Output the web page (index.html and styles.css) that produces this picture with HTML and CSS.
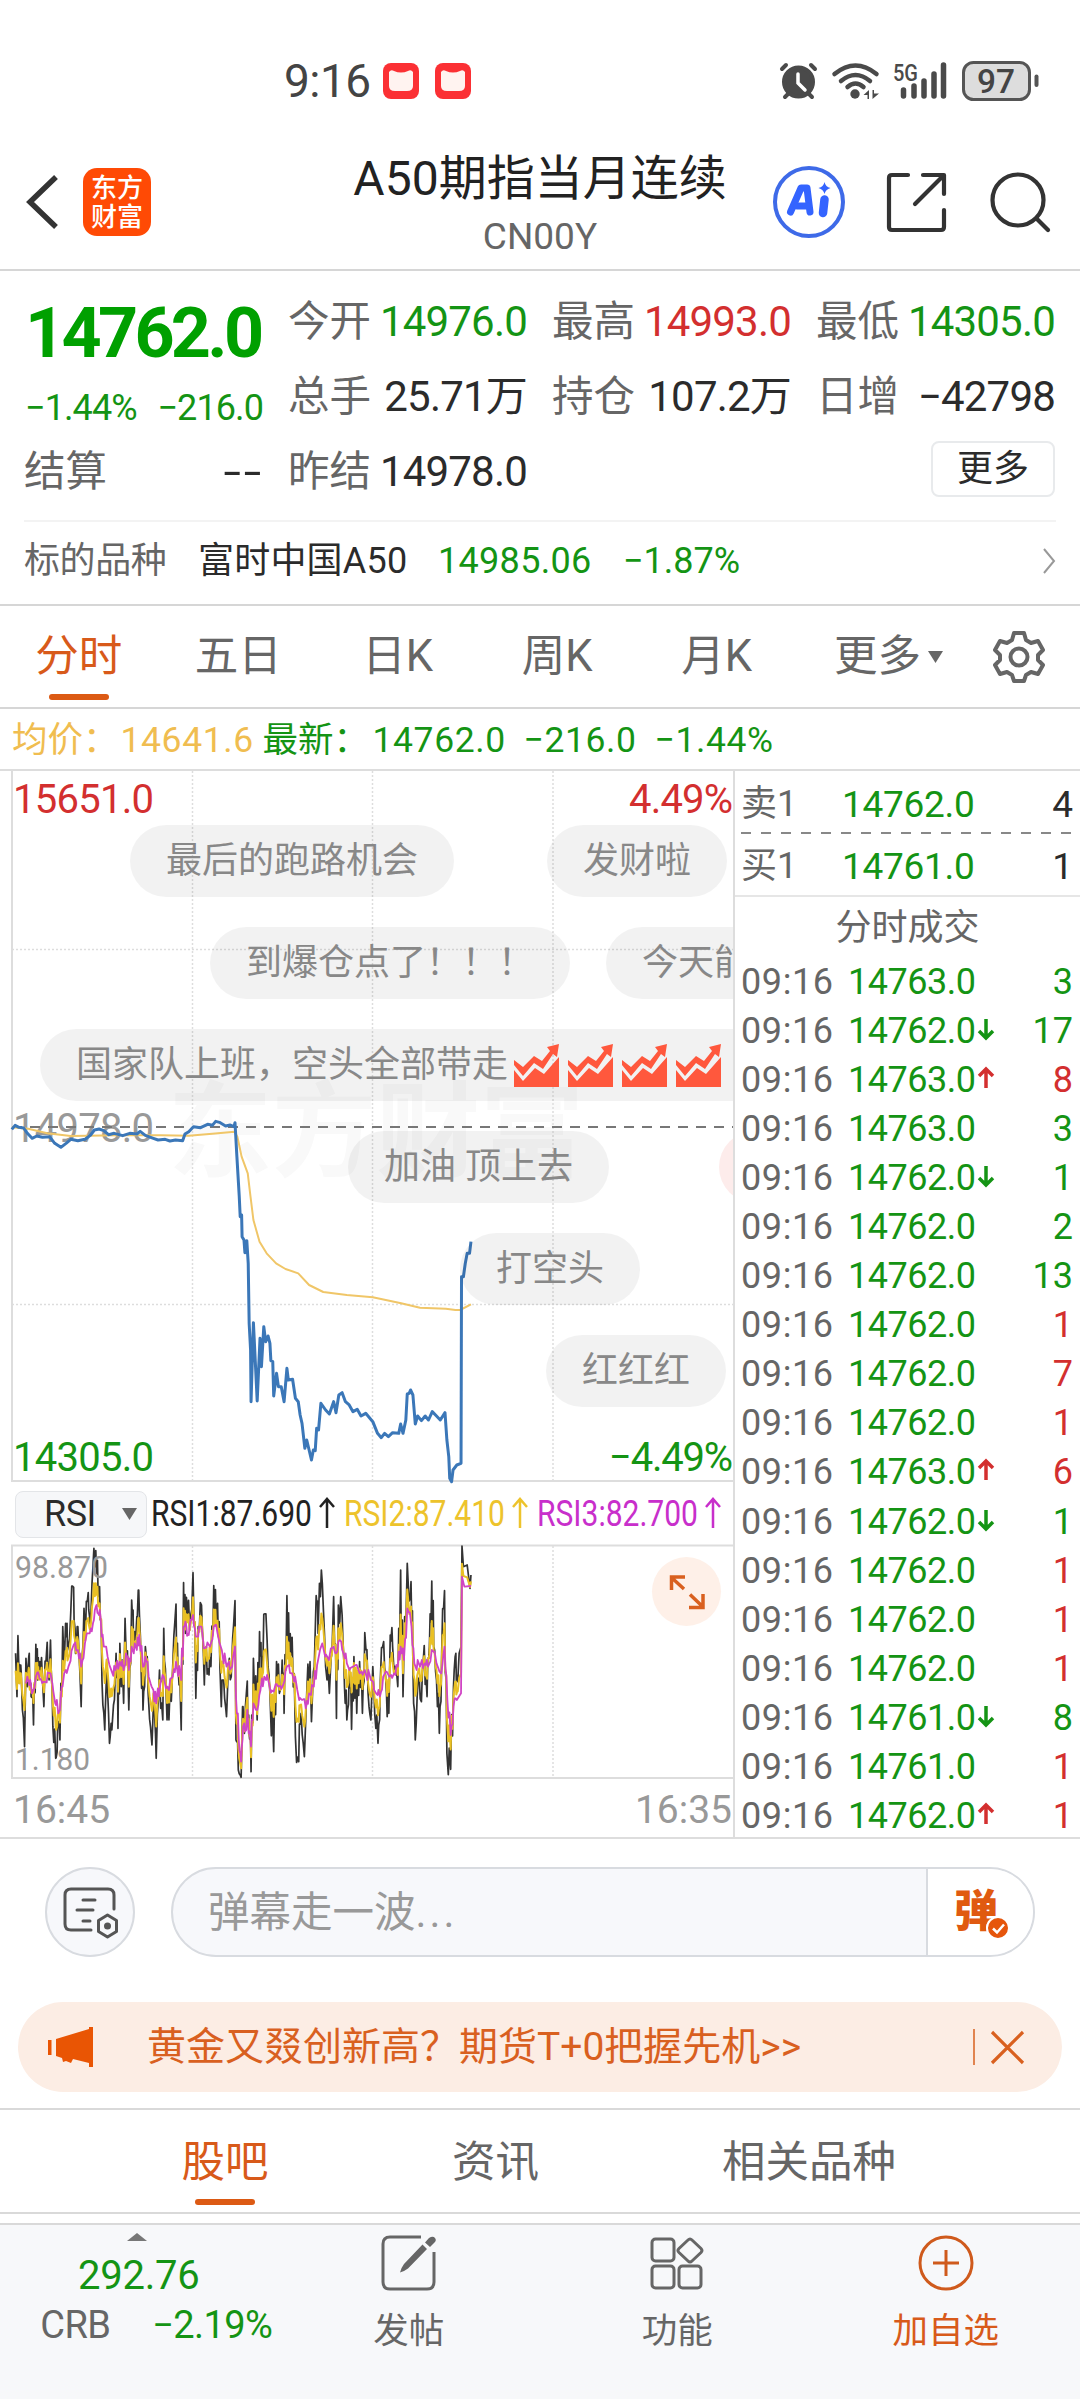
FILE: index.html
```html
<!DOCTYPE html>
<html lang="zh-CN">
<head>
<meta charset="utf-8">
<title>A50期指当月连续</title>
<link rel="stylesheet" href="styles.css">
</head>
<body>
<div class="status">
  <span class="clock">9:16</span>
  <svg class="packet" viewBox="0 0 36 36"><rect width="36" height="36" rx="8" fill="#fb3034"/><path d="M6 9q2-3 5-1q7 3 14 0q3-2 5 1v14q0 5-6 5H12q-6 0-6-5z" fill="#fff3f0"/></svg>
  <svg class="packet" viewBox="0 0 36 36"><rect width="36" height="36" rx="8" fill="#fb3034"/><path d="M6 9q2-3 5-1q7 3 14 0q3-2 5 1v14q0 5-6 5H12q-6 0-6-5z" fill="#fff3f0"/></svg>
  <svg class="indicators" viewBox="780 58 262 44">
    <g fill="none" stroke="#4a4a4a" stroke-width="4" stroke-linecap="round">
      <circle cx="798.500" cy="81" r="14.500" fill="#4a4a4a"/>
      <path d="M782 68l4-4M815 68l-4-4M788 93l-3 3M809 93l3 3"/>
      <path d="M798 73v9l7 7" stroke="#fff" stroke-width="3.500"/>
      <path d="M834.500 73q21-17 42 0M841 80q14.500-12 29 0M847.500 86q8-7 16 0" stroke-width="4.500"/>
      <path d="M903.500 89v6M914 85v10M924 80v15M934 73v22M943.500 64v31" stroke-width="5.500"/>
    </g>
    <circle cx="855" cy="93" r="4.700" fill="#4a4a4a"/><path d="M869 89v9h-1.500v-4H863.500zM872.500 98v-9H874v3.500h5z" fill="#4a4a4a"/>
    <text x="893" y="80" textLength="25" lengthAdjust="spacingAndGlyphs" font-size="24" font-weight="500" fill="#4a4a4a">5G</text>
    <rect x="963.500" y="61.500" width="66" height="37" rx="10" fill="#ddd" stroke="#555" stroke-width="3"/>
    <path d="M1036.500 75.500v8.500" stroke="#555" stroke-width="4" stroke-linecap="round"/>
    <text x="977" y="92" textLength="38" lengthAdjust="spacingAndGlyphs" font-size="34" font-weight="500" fill="#444">97</text>
  </svg>
</div>

<header class="header">
  <svg class="back" viewBox="0 0 34 56"><path d="M30 3L4 28l26 25" fill="none" stroke="#333" stroke-width="5.500"/></svg>
  <div class="logo"><span>东方</span><span>财富</span></div>
  <div class="title"><h1>A50期指当月连续</h1><p>CN00Y</p></div>
  <svg class="ai" viewBox="0 0 72 72"><circle cx="36" cy="36" r="34" fill="none" stroke="#3e6ae8" stroke-width="4"/><g stroke="#3464ff" stroke-linejoin="round" stroke-linecap="round" fill="none"><path d="M17.500 46L28 22h6l3 24" stroke-width="7"/><path d="M24 40h10" stroke-width="7"/><path d="M51.500 33.500L50 47" stroke-width="8.500"/></g><path d="M51.500 16q1 5 6 6q-5 1.500-6 6q-1-4.500-6-6q5-1 6-6z" fill="#3464ff"/></svg>
  <svg class="share" viewBox="0 0 60 60"><g fill="none" stroke="#333" stroke-width="4.200" stroke-linecap="round" stroke-linejoin="round"><path d="M22 3H6q-3 0-3 3v49q0 3 3 3h49q3 0 3-3V38"/><path d="M37 3h21v19M57 4L29 32"/></g></svg>
  <svg class="search" viewBox="0 0 62 62"><g fill="none" stroke="#333" stroke-width="4.200" stroke-linecap="round"><circle cx="29" cy="29" r="25.500"/><path d="M48 48l11 11"/></g></svg>
</header>

<section class="quote">
  <div class="last"><b>14762.0</b><p class="down"><span>−1.44%</span><span>−216.0</span></p></div>
  <div class="cell"><i>今开</i><span class="down">14976.0</span></div>
  <div class="cell"><i>最高</i><span class="up">14993.0</span></div>
  <div class="cell"><i>最低</i><span class="down">14305.0</span></div>
  <div class="cell"><i>总手</i><span>25.71万</span></div>
  <div class="cell"><i>持仓</i><span>107.2万</span></div>
  <div class="cell"><i>日增</i><span>−42798</span></div>
  <div class="cell"><i>结算</i><span class="none">--</span></div>
  <div class="cell"><i>昨结</i><span>14978.0</span></div>
  <div class="more"><span>更多</span></div>
</section>
<section class="underlying">
  <span class="kind">标的品种</span><span class="name">富时中国A50</span><span class="down value">14985.06</span><span class="down">−1.87%</span>
  <svg viewBox="0 0 14 26"><path d="M2 1l10 12L2 25" fill="none" stroke="#999" stroke-width="2"/></svg>
</section>

<nav class="periods">
  <span class="active">分时</span><span>五日</span><span>日K</span><span>周K</span><span>月K</span><span>更多<svg class="caret" viewBox="0 0 15 12"><path d="M0 0h15L7.500 12z" fill="#666"/></svg></span>
  <svg class="gear" viewBox="0 0 52 52"><g fill="none" stroke="#666" stroke-width="4" stroke-linejoin="round"><path d="M21 2h10l2 7 5 3 7-2 5 9-5 5v5l5 5-5 9-7-2-5 3-2 6H21l-2-6-5-3-7 2-5-9 5-5v-5l-5-5 5-9 7 2 5-3z"/><circle cx="26" cy="26" r="8.500"/></g></svg>
</nav>
<div class="summary">
  <span class="avg">均价：</span><span class="avg num">14641.6</span><span class="down latest">最新：</span><span class="down num">14762.0</span><span class="down num2">−216.0</span><span class="down num2">−1.44%</span>
</div>

<main class="board">
  <div class="charts">
    <div class="price-chart">
      <svg viewBox="0 771 734 712">
        <text class="mark" x="168" y="1169">东方财富</text>
        <path class="grid" d="M192.500 771V1481M372.500 771V1481M553 771V1481M12 949.500H734M12 1304.500H734"/>
        <path d="M12 771V1481H734" fill="none" stroke="#ddd" stroke-width="2"/>
        <text class="mid" x="13" y="1142" textLength="141">14978.0</text>
        <path d="M12 1127H734" stroke="#777" stroke-width="2" stroke-dasharray="10 8" fill="none"/>
        <g transform="translate(0 1090) scale(.4719 .33333)" fill="none">
          <path class="line avg-line" d="M25 112L60 116 100 130 150 138 250 136 340 136 400 137 450 131 497 125 503 140 512 200 525 250 530 310 537 390 550 455 565 490 585 520 605 537 632 550 655 585 685 606 735 615 790 622 850 640 890 653 945 656 965 660 975 660 998 643"/>
          <path class="line last-line" d="M25 118L32 106 40 112 50 114 58 130 68 145 78 138 90 142 105 140 116 160 129 172 140 160 150 148 165 152 180 148 192 135 200 120 210 117 220 122 230 134 242 130 260 137 275 130 290 132 297 124 308 136 325 145 335 150 350 148 360 153 372 150 387 152 392 132 400 125 410 110 425 113 440 103 450 106 457 94 465 97 478 108 488 105 496 110 498 98 502 200 507 320 509 380 512 375 513 440 517 450 519 488 523 452 526 520 528 700 531 780 532 935 537 698 541 815 545 933 551 745 554 830 559 710 563 755 568 738 572 760 574 812 578 815 580 918 586 850 590 890 596 890 602 935 608 835 611 870 620 868 626 925 632 935 636 975 640 1000 646 1075 650 1050 655 1080 660 1110 664 1080 668 1082 671 1015 675 1020 680 940 690 960 698 972 707 935 712 968 718 915 725 908 732 935 740 945 748 965 757 958 765 978 775 970 790 995 800 1030 808 1043 815 1030 823 1040 832 1028 845 1030 849 1002 854 1030 860 990 863 912 867 910 870 900 875 915 880 1002 885 978 893 992 901 978 908 990 916 965 925 978 933 990 943 968 947 1050 951 1100 953 1165 957 1175 960 1140 968 1125 977 1120 978 560 982 560 986 520 990 490 995 490 998 455"/>
        </g>
        <text class="up" x="13" y="813" textLength="141">15651.0</text>
        <text class="up" x="629" y="813" textLength="104">4.49%</text>
        <text class="down" x="13" y="1471" textLength="141">14305.0</text>
        <text class="down" x="609" y="1471" textLength="124">−4.49%</text>
      </svg>
      <div class="danmaku">
        <span style="left:130px;top:54px">最后的跑路机会</span>
        <span style="left:547px;top:54px">发财啦</span>
        <span style="left:210px;top:156px">到爆仓点了！！！</span>
        <span style="left:606px;top:156px">今天能</span>
        <span style="left:40px;top:258px">国家队上班，空头全部带走<svg viewBox="0 0 216 44"><defs><g id="surge"><path d="M0 17l9 7 11-11 8 5 8-10-3-4L45 1l-2 13-4-3-10 15-9-6L9 33 0 22z"/><path d="M0 27l9 11 12-13 9 6L45 14v30H0z"/></g></defs><g fill="#ff583d"><use href="#surge"/><use href="#surge" x="54"/><use href="#surge" x="108"/><use href="#surge" x="162"/></g></svg></span>
        <span style="left:348px;top:360px">加油 顶上去</span>
        <span class="hot" style="left:719px;top:360px"></span>
        <span style="left:460px;top:462px">打空头</span>
        <span style="left:546px;top:564px">红红红</span>
      </div>
    </div>
    <div class="indicator">
      <div class="select">RSI<svg class="caret" viewBox="0 0 15 12"><path d="M0 0h15L7.500 12z" fill="#666"/></svg></div>
      <svg class="readings" viewBox="150 1484 576 60">
        <g font-size="37"><text x="151" y="1526" textLength="161" lengthAdjust="spacingAndGlyphs" fill="#222">RSI1:87.690</text><text x="344" y="1526" textLength="161" lengthAdjust="spacingAndGlyphs" fill="#edc32c">RSI2:87.410</text><text x="537" y="1526" textLength="161" lengthAdjust="spacingAndGlyphs" fill="#c82fcb">RSI3:82.700</text></g>
        <g fill="none" stroke-width="2.500"><path d="M327 1528V1499M320 1507l7-8 7 8" stroke="#222"/><path d="M520 1528V1499M513 1507l7-8 7 8" stroke="#edc32c"/><path d="M713 1528V1499M706 1507l7-8 7 8" stroke="#c82fcb"/></g>
      </svg>
    </div>
    <svg class="rsi-chart" viewBox="0 1544 734 236">
      <path d="M12 1779V1545.500H734M12 1778H734" fill="none" stroke="#ddd" stroke-width="2"/>
      <path class="grid" d="M192.500 1546V1777M372.500 1546V1777M553 1546V1777"/>
      <g transform="translate(0 1480) scale(.4719 .33333)" fill="none"><path id="fast" class="line fast"/><path id="medium" class="line medium"/><path id="slow" class="line slow"/></g>
      <g font-size="31" fill="#999"><text x="15" y="1578" textLength="93" lengthAdjust="spacingAndGlyphs">98.870</text><text x="15" y="1770" textLength="75" lengthAdjust="spacingAndGlyphs">1.180</text></g>
      <circle cx="686.500" cy="1591.500" r="34.500" fill="#fef0e8"/>
      <path d="M671.500 1590V1577H685M672 1578l12 11M703 1594v13.500H689M702 1606l-12-11.500" fill="none" stroke="#d9601f" stroke-width="3.500"/>
    </svg>
    <div class="times"><span>16:45</span><span>16:35</span></div>
  </div>

  <aside class="ticks">
    <div class="ask"><i>卖1</i><span class="down">14762.0</span><em>4</em></div>
    <div class="bid"><i>买1</i><span class="down">14761.0</span><em>1</em></div>
    <h2>分时成交</h2>
    <ul id="trades"></ul>
  </aside>
</main>

<div class="composer">
  <div class="tune"><svg viewBox="0 0 56 52"><g fill="none" stroke="#555" stroke-width="3" stroke-linecap="round" stroke-linejoin="round"><path d="M28 43H8q-6 0-6-6V8q0-6 6-6h37q6 0 6 6v14"/><path d="M20 13h12M14 23h16M20 34h7"/><path d="M44.500 28l9 5.500v11l-9 5.500-9-5.500v-11z"/></g><circle cx="44.500" cy="39" r="3.500" fill="#555"/></svg></div>
  <div class="field"><span class="hint">弹幕走一波<span class="dots">...</span></span><div class="send"><b>弹</b><svg viewBox="0 0 24 24"><circle cx="12" cy="12" r="11" fill="#e6560c" stroke="#fff" stroke-width="2"/><path d="M7 12.500l4 4 7-8" fill="none" stroke="#fff" stroke-width="2.500"/></svg></div></div>
</div>
<div class="banner">
  <svg class="horn" viewBox="0 0 46 40"><path d="M0 13h3.500v15H0zM8 12L41 2V0h4v40h-4v-4l-16-4-2 4-5-2-3 1-1-4-6-2z" fill="#e95504"/></svg>
  <span>黄金又叕创新高？期货T+0把握先机&gt;&gt;</span>
  <svg class="close" viewBox="0 0 52 38"><path d="M1 1v36" stroke="#d9601f" stroke-width="1.500"/><path d="M19 4l31 31M50 4L19 35" stroke="#d9601f" stroke-width="3.200"/></svg>
</div>
<nav class="sections"><span class="active">股吧</span><span>资讯</span><span>相关品种</span></nav>

<footer class="toolbar">
  <div class="index"><svg viewBox="0 0 20 8"><path d="M10 0l10 8H0z" fill="#777"/></svg><b class="down">292.76</b><p><span>CRB</span><span class="down">−2.19%</span></p></div>
  <div class="tool"><svg viewBox="0 0 56 56"><path d="M40 2H9q-7 0-7 7v38q0 7 7 7h37q7 0 7-7V17" fill="none" stroke="#666" stroke-width="3"/><path d="M41.500 9.500l4.500 4.500L27 33.500q-4 3-8 4q1-4.500 4-8.500zM44 7.500l4-4.500q4-2.500 6 0t-1 5l-4 4z" fill="#666"/></svg>发帖</div>
  <div class="tool"><svg viewBox="0 0 56 56"><g fill="none" stroke="#666" stroke-width="3"><rect x="3" y="4" width="22" height="22" rx="3.500"/><rect x="3" y="31" width="22" height="22" rx="3.500"/><rect x="30" y="31" width="22" height="22" rx="3.500"/><path d="M39 5q2-2 4 0l9 8.500q2 2 0 4L43 26q-2 2-4 0l-9-8.500q-2-2 0-4z"/></g></svg>功能</div>
  <div class="tool add"><svg viewBox="0 0 56 56"><g fill="none" stroke="#cf5a1c" stroke-width="3"><circle cx="28" cy="28" r="26"/><path d="M15 28h26M28 15v26"/></g></svg>加自选</div>
</footer>
<script src="board.js"></script>
</body>
</html>
```
FILE: styles.css
```css
* { box-sizing: border-box; }
body { margin: 0; width: 1080px; height: 2400px; overflow: hidden; background: #fff; color: #2b2b2b; font-family: Roboto, "Noto Sans CJK SC", sans-serif; font-size: 42px; line-height: 1; }
h1, h2, p, ul { margin: 0; padding: 0; font-weight: 400; list-style: none; }
i, em { font-style: normal; }
svg { display: block; flex: none; overflow: visible; }
span { white-space: nowrap; }
.down { color: #149414; fill: #149414; }
.up { color: #d32f2f; fill: #d32f2f; }

.status { height: 134px; padding: 27px 38px 0 284px; display: flex; align-items: center; }
.clock { width: 99px; font-size: 46px; color: #444; letter-spacing: -.5px; }
.packet { width: 36px; height: 36px; margin-right: 16px; }
.indicators { width: 262px; height: 44px; margin-left: auto; }

.header { height: 137px; padding: 1px 28px 0 26px; display: flex; align-items: center; border-bottom: 2px solid #d6d6d6; }
.back { width: 34px; height: 56px; }
.logo { width: 68px; height: 68px; margin-left: 23px; border-radius: 14px; background: #ff4a05; color: #fff; font-size: 26px; font-weight: 500; display: flex; flex-direction: column; align-items: center; justify-content: center; gap: 3px; }
.title { width: 376px; margin-left: 201px; text-align: center; color: #222; }
.title h1 { font-size: 48px; white-space: nowrap; margin-top: 5px; }
.title p { margin-top: 15px; font-size: 37px; color: #666; }
.ai { width: 72px; height: 72px; margin-left: 45px; }
.share { width: 60px; height: 60px; margin-left: 41px; }
.search { width: 62px; height: 62px; margin-left: 43px; }

.quote { height: 249px; padding: 13px 24px 0 25px; display: grid; grid-template-columns: repeat(4, 238px); grid-auto-rows: 75px; column-gap: 26px; }
.last { grid-row: span 2; color: #00a000; padding-top: 14px; }
.last b { display: block; font-size: 70px; font-weight: 700; letter-spacing: -3.700px; height: 68px; }
.last p { display: flex; justify-content: space-between; font-size: 36px; letter-spacing: -.9px; margin-top: 24px; white-space: nowrap; }
.cell { display: flex; align-items: center; justify-content: space-between; letter-spacing: -.8px; }
.cell i { color: #666; font-size: 41.500px; margin-left: -1px; letter-spacing: 0; }
.cell .none { transform: scaleX(1.5); transform-origin: right; letter-spacing: 2px; margin-right: -1px; }
.more { grid-column: 4; display: flex; justify-content: flex-end; align-items: center; }
.more span { width: 124px; height: 56px; margin-bottom: 5px; border: 2px solid #e8eaec; border-radius: 8px; font-size: 36px; display: flex; align-items: center; justify-content: center; }
.underlying { height: 84px; margin: 0 24px 0 24px; border-top: 2px solid #f3f3f3; font-size: 36px; display: flex; align-items: center; padding-bottom: 4px; }
.kind { width: 174px; color: #666; letter-spacing: -.4px; }
.name { width: 240px; letter-spacing: .2px; }
.value { width: 185px; letter-spacing: .3px; }
.underlying svg { width: 14px; height: 26px; margin-left: auto; }

.periods { height: 105px; border-top: 2px solid #d6d6d6; border-bottom: 2px solid #d6d6d6; display: flex; align-items: center; color: #666; font-size: 43.500px; padding: 0 35px 0 0; }
.periods span { width: 159.500px; height: 100%; padding-right: 2px; display: flex; align-items: center; justify-content: center; position: relative; }
.periods span:nth-child(6) { width: 184px; gap: 7px; }
.caret { width: 15px; height: 12px; }
.gear { width: 52px; height: 52px; margin-left: auto; }
.periods .active, .sections .active { color: #d85a1a; }
.active::after { content: ""; position: absolute; bottom: 7px; left: calc(50% - 31px); width: 60px; height: 6px; border-radius: 3px; background: #dc5a14; }
.summary { height: 62px; border-bottom: 2px solid #ddd; padding: 3px 0 0 12px; display: flex; align-items: center; font-size: 35.500px; }
.avg { color: #f0bd50; }
.num { width: 144px; letter-spacing: .6px; padding-left: 2px; }
.summary .num2 { width: 131px; letter-spacing: .6px; }
.summary .latest { width: 108px; }
.summary .down.num { width: 153px; }

.board { height: 1068px; display: flex; border-bottom: 2px solid #ddd; }
.charts { width: 735px; border-right: 2px solid #ddd; }
.price-chart { position: relative; height: 713px; overflow: hidden; }
.price-chart > svg { width: 734px; height: 712px; font-size: 40px; }
.mark { font-size: 104px; font-weight: 700; fill: #f9f9f9; }
.mid { fill: #999; }
.grid { fill: none; stroke: #ddd; stroke-width: 1.500; stroke-dasharray: 2 2; }
.line { vector-effect: non-scaling-stroke; stroke-linejoin: round; }
.avg-line { stroke: #f0c668; stroke-width: 2; }
.last-line { stroke: #3b77b8; stroke-width: 3; }
.danmaku { position: absolute; inset: 0; }
.danmaku span { position: absolute; height: 72px; padding: 0 36px; border-radius: 36px; background: rgba(0,0,0,.05); color: #888; font-size: 36px; display: flex; align-items: center; white-space: pre; }
.danmaku svg { width: 216px; height: 44px; margin: 0 0 0 6px; }
.danmaku .hot { background: #fdeceb; }
.indicator { height: 60px; display: flex; align-items: center; padding-left: 15px; }
.select { width: 132px; height: 47px; padding: 0 9px 0 28px; border: 1px solid #e3e5e8; border-radius: 8px; background: #f6f7f9; font-size: 36px; letter-spacing: -.5px; display: flex; align-items: center; justify-content: space-between; }
.readings { width: 576px; height: 60px; margin-left: 3px; }
.rsi-chart { width: 734px; height: 236px; }
.fast { stroke: #333; stroke-width: 1.700; }
.medium { stroke: #e9c024; stroke-width: 2; }
.slow { stroke: #d044c4; stroke-width: 1.800; }
.times { height: 58px; padding: 2px 1px 0 13px; display: flex; align-items: center; justify-content: space-between; font-size: 39px; color: #999; }

.ticks { flex: 1; font-size: 36px; }
.ask, .bid, .ticks li { display: grid; align-items: center; padding: 3px 7px 0 6px; }
.ask, .bid { grid-template-columns: 101px 1fr auto; height: 63px; font-size: 37px; }
.ask span, .bid span { letter-spacing: -.3px; }
.ask { background: repeating-linear-gradient(90deg, #888 0 10px, transparent 10px 20px) 6px 100% / 331px 2px no-repeat; }
.bid { border-bottom: 2px solid #e6e6e6; }
.ticks i { color: #666; font-size: 36px; }
.ticks h2 { height: 58px; font-size: 36px; color: #666; display: flex; align-items: center; justify-content: center; padding-top: 3px; }
.ticks li { height: 49.100px; grid-template-columns: 107px 126px 1fr auto; padding-top: 4px; }
.ticks li i { font-size: 36px; letter-spacing: .6px; }
.ticks li span { letter-spacing: -.5px; }
.ticks li svg { width: 16px; height: 24px; margin: -4px 0 0 4px; stroke-width: 3.500; stroke: currentColor; }
.ticks li .arrow { fill: none; }
.ticks li em { grid-column: 4; }

.composer { height: 163px; padding: 28px 45px 0; display: flex; justify-content: space-between; }
.tune { width: 90px; height: 90px; border: 2px solid #d8dbe0; border-radius: 50%; background: #f7f8fb; display: flex; align-items: center; justify-content: center; }
.tune svg { width: 56px; height: 52px; margin: 2px 0 0 2px; }
.field { width: 864px; height: 90px; border: 2px solid #d8dbe0; border-radius: 45px; background: #f7f8fb; overflow: hidden; display: flex; align-items: stretch; }
.hint { flex: 1; padding: 2px 0 0 35px; font-size: 41.500px; color: #999; display: flex; align-items: center; }
.dots { letter-spacing: 3px; }
.send { width: 107px; background: #fff; border-left: 2px solid #d8dbe0; color: #e05a10; font-size: 44px; display: flex; align-items: center; padding-left: 26px; }
.send b { font-weight: 900; }
.send svg { width: 24px; height: 24px; margin: 32px 0 0 -12px; }
.banner { height: 90px; margin: 0 18px; padding: 0 37px 0 30px; border-radius: 45px; background: #fcede4; display: flex; align-items: center; color: #d9601f; font-size: 39px; }
.horn { width: 46px; height: 40px; margin-right: 53px; }
.close { width: 52px; height: 38px; margin-left: auto; }
.sections { height: 106px; margin-top: 16px; border-top: 2px solid #d9d9d9; border-bottom: 2px solid #d9d9d9; padding-left: 71px; display: flex; color: #666; font-size: 43.500px; }
.sections span { width: 309px; padding: 4px 42px 0 40px; display: flex; align-items: center; justify-content: center; position: relative; }
.sections span:first-child { width: 310px; }
.sections span:nth-child(2) { width: 231px; }
.sections span:nth-child(3) { width: 396px; }

.toolbar { height: 176px; margin-top: 9px; background: #f7f8fa; border-top: 2px solid #d9d9d9; display: flex; color: #666; }
.index { width: 275px; display: flex; flex-direction: column; align-items: center; padding-top: 8px; }
.index svg { width: 20px; height: 8px; margin-left: 1px; }
.index b { margin: 15px 0 0 4px; font-weight: 400; font-size: 40px; letter-spacing: -.2px; }
.index p { width: 232px; margin: 10px 0 0 39px; display: flex; justify-content: space-between; font-size: 38px; letter-spacing: -.6px; }
.tool { flex: none; width: 268.500px; display: flex; flex-direction: column; align-items: center; font-size: 35.500px; padding-top: 10px; gap: 23px; }
.tool:nth-child(2) { margin-left: 1px; }
.tool svg { width: 56px; height: 56px; }
.add { color: #d85a1a; }
```
FILE: board.js
```js
// Latest trades: price, direction of the move, volume, side of the volume.
const trades = [
  ["14763.0", "", 3, "down"], ["14762.0", "down", 17, "down"], ["14763.0", "up", 8, "up"],
  ["14763.0", "", 3, "down"], ["14762.0", "down", 1, "down"], ["14762.0", "", 2, "down"],
  ["14762.0", "", 13, "down"], ["14762.0", "", 1, "up"], ["14762.0", "", 7, "up"],
  ["14762.0", "", 1, "up"], ["14763.0", "up", 6, "up"], ["14762.0", "down", 1, "down"],
  ["14762.0", "", 1, "up"], ["14762.0", "", 1, "up"], ["14762.0", "", 1, "up"],
  ["14761.0", "down", 8, "down"], ["14761.0", "", 1, "up"], ["14762.0", "up", 1, "up"]
];
const arrows = { up: "M8 22V3M1 10l7-7 7 7", down: "M8 2v19M1 14l7 7 7-7" };
document.getElementById("trades").innerHTML = trades.map(([price, move, volume, side]) => `
  <li><i>09:16</i><span class="down">${price}</span>${move ? `<svg class="arrow ${move}" viewBox="0 0 16 24"><path d="${arrows[move]}"/></svg>` : ""}<em class="${side}">${volume}</em></li>`).join("");

// RSI series, as x y pairs.
const parse = text => text.split(";").map(pair => pair.split(",").map(Number));
const fast = parse("33,520;36,650;38,467;41,610;45,580;52,800;55,535;58,620;62,520;66,650;71,735;76,493;80,600;84,545;90,600;93,680;100,487;104,600;107,480;112,740;118,835;122,750;127,780;133,440;136,560;139,430;143,510;150,395;156,322;160,520;165,440;172,680;178,385;181,470;187,338;191,440;197,260;203,212;208,350;211,320;216,600;222,750;226,560;232,790;237,750;246,520;250,745;254,490;262,670;265,415;273,690;279,360;283,500;290,410;294,330;299,560;303,690;308,500;314,640;322,795;326,640;331,835;338,570;345,720;347,445;352,640;358,720;366,560;373,372;377,560;384,750;389,308;393,460;395,352;402,450;409,278;415,655;420,440;427,375;433,615;437,500;443,585;447,560;453,317;458,420;461,370;466,560;469,680;474,600;480,710;484,560;490,590;498,362;500,780;505,870;511,892;514,680;518,760;524,603;528,760;532,875;537,535;545,720;550,455;554,600;559,403;566,480;572,640;580,815;586,545;592,640;598,540;602,700;608,347;613,530;619,472;626,770;633,845;638,700;645,830;650,640;657,545;660,725;670,347;674,460;677,310;683,310;690,560;698,640;707,350;713,715;717,375;725,405;730,620;735,720;740,580;745,748;750,530;756,700;762,545;768,700;773,458;780,640;786,720;790,560;794,700;801,790;806,600;813,485;819,640;824,700;827,465;832,500;840,570;843,620;849,270;854,650;863,250;866,340;871,305;875,560;880,780;886,600;893,665;899,497;905,650;910,500;915,303;919,500;925,600;931,760;936,520;942,332;947,820;955,868;961,620;966,520;970,605;973,520;977,500;979,198;982,260;990,255;996,325;998,285");
const slow = parse("55,610;58,590;68,640;76,590;84,595;93,605;107,580;117,670;122,680;127,690;136,580;145,560;156,495;165,510;172,560;180,490;190,460;197,430;203,380;208,400;213,410;220,500;228,530;237,575;245,570;254,545;262,570;267,520;273,570;279,500;290,510;295,465;303,560;308,530;315,590;325,630;331,670;340,610;347,590;358,630;366,590;373,545;384,600;389,440;395,440;400,465;409,405;415,470;427,440;432,505;445,500;453,440;461,460;470,510;480,560;492,560;498,500;500,650;506,780;511,845;515,740;522,750;524,690;532,800;537,670;545,690;552,630;560,590;570,610;580,635;590,620;600,615;608,560;619,580;630,630;640,660;648,685;655,640;665,620;672,555;683,490;697,540;707,500;712,520;720,480;728,520;735,550;748,560;762,580;773,570;786,600;797,640;805,650;812,590;825,590;835,580;843,560;849,500;856,540;863,385;872,440;878,550;890,560;900,550;907,560;915,510;925,550;935,580;942,500;948,660;955,765;961,680;968,660;977,640;979,290;984,320;998,318");
const at = (series, x) => {
  const i = series.findIndex(p => p[0] >= x);
  if (i <= 0) return series[0][1];
  const [a, b] = [series[i - 1], series[i]];
  return a[1] + (b[1] - a[1]) * (x - a[0]) / (b[0] - a[0]);
};
// Fills the gaps between the turning points with small swings, inside the plot's bounds.
const dense = (series, swing) => {
  const out = [];
  const clamp = y => Math.max(205, Math.min(885, y));
  for (let i = 0; i < series.length; i++) {
    out.push(series[i]);
    const next = series[i + 1];
    if (!next || next[0] > 975 || next[0] - series[i][0] < 4) continue;
    const x = (series[i][0] + next[0]) / 2;
    const y = (series[i][1] + next[1]) / 2;
    out.push([x - 1, clamp(y + (i % 3 - 1) * swing)], [x + 1, clamp(y - (i % 2 ? 1 : -.6) * swing)]);
  }
  return out;
};
const draw = (id, series) => document.getElementById(id).setAttribute("d", "M" + series.map(p => p.join(" ")).join("L"));
draw("fast", dense(fast, 40));
draw("medium", dense(fast.map(([x, y]) => [x, y * .42 + at(slow, x) * .58]), 24));
draw("slow", dense(slow, 15));
```
